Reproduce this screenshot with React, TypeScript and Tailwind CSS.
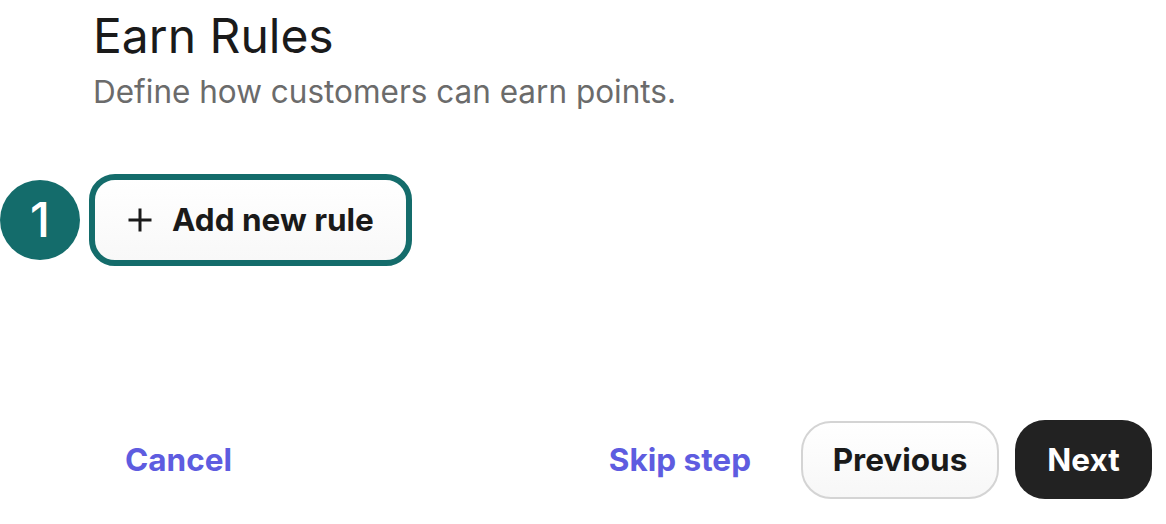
import React from "react";

export default function App() {
  return (
    <div className="relative w-[1166px] h-[524px] bg-white overflow-hidden" style={{ fontFamily: "Inter, 'Noto Sans', sans-serif" }}>
      <div className="pl-[93px] pt-[6px]">
        <h1 className="text-[48px] leading-[60px] font-normal text-[#1a1a1a]">Earn Rules</h1>
        <p className="text-[31.5px] leading-[42px] text-[#6b6b6b] mt-[5px]">Define how customers can earn points.</p>
      </div>

      <div className="flex items-center mt-[61px] pl-[89px]">
        <button className="flex items-center gap-[20px] h-[92px] w-[323px] pl-[30px] rounded-[26px] border-[6px] border-[#146c6b] bg-gradient-to-b from-white to-[#f8f8f8]">
          <svg width="24" height="24" viewBox="0 0 24 24" className="ml-[3px]">
            <path d="M12 2v20M2 12h20" stroke="#1a1a1a" strokeWidth="3" strokeLinecap="square" />
          </svg>
          <span className="text-[31.5px] font-bold text-[#1a1a1a]">Add new rule</span>
        </button>
      </div>

      <div className="absolute left-0 top-[180px] w-[80px] h-[80px] rounded-full bg-[#146c6b] flex items-center justify-center text-white text-[48px] font-medium">1</div>

      <div className="flex items-center mt-[154px] pl-[93px] pr-[14px]">
        <button className="px-[32px] text-[31.5px] font-bold text-[#5e5ce0]">Cancel</button>
        <div className="flex-1" />
        <button className="px-[32px] text-[31.5px] font-bold text-[#5e5ce0] mr-[18px]">Skip step</button>
        <button className="h-[78px] w-[198px] rounded-[30px] border-2 border-[#d4d4d4] bg-gradient-to-b from-white to-[#f7f7f7] text-[31.5px] font-bold text-[#1a1a1a] mr-[16px]">Previous</button>
        <button className="h-[79px] w-[137px] rounded-[30px] bg-[#222222] text-[31.5px] font-bold text-white">Next</button>
      </div>
    </div>
  );
}
